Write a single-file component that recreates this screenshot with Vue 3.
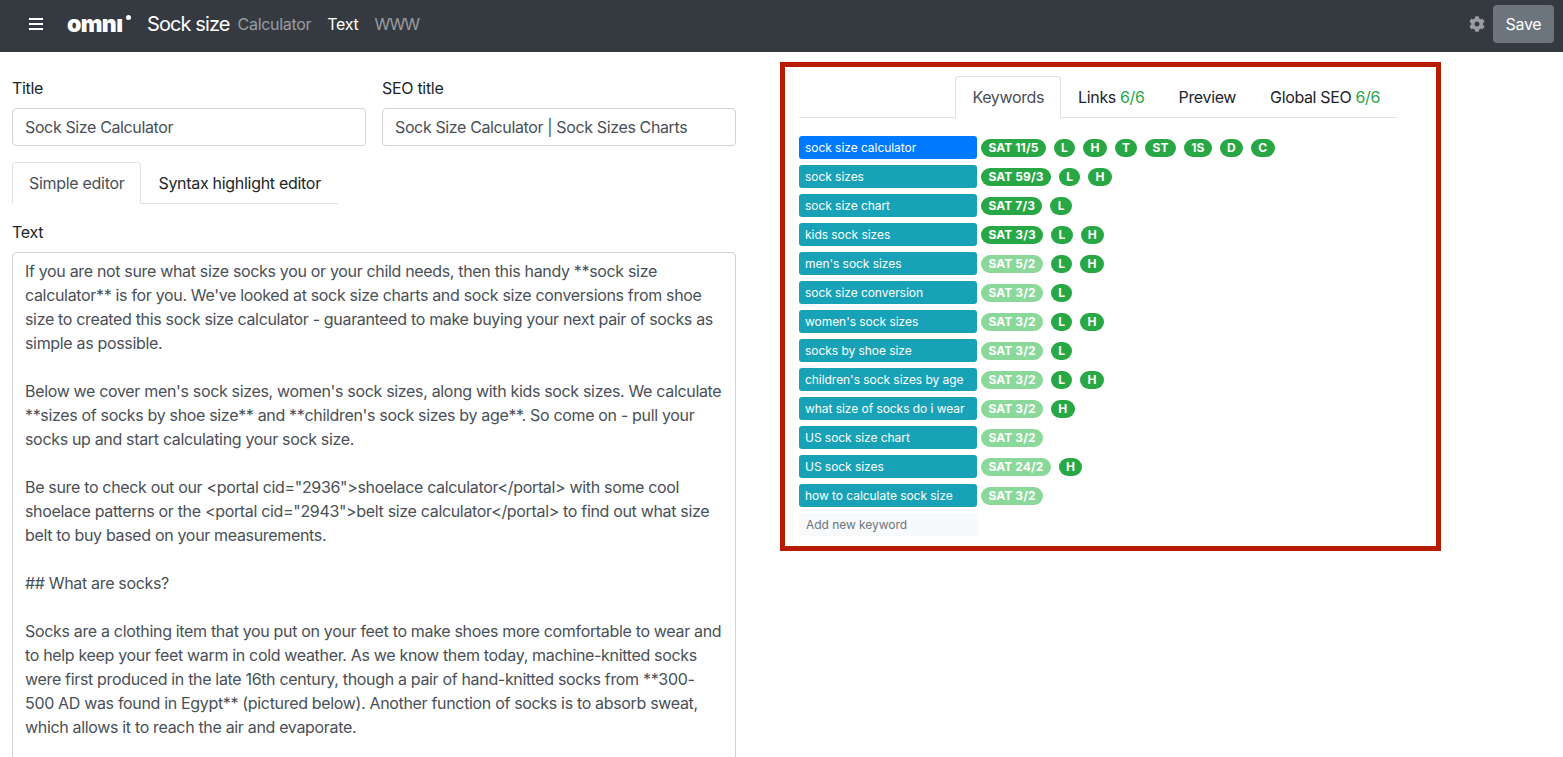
<script setup>
const keywords = [
  { name: 'sock size calculator', sat: '11/5', strong: true, tags: ['L', 'H', 'T', 'ST', '1S', 'D', 'C'], active: true },
  { name: 'sock sizes', sat: '59/3', strong: true, tags: ['L', 'H'] },
  { name: 'sock size chart', sat: '7/3', strong: true, tags: ['L'] },
  { name: 'kids sock sizes', sat: '3/3', strong: true, tags: ['L', 'H'] },
  { name: "men's sock sizes", sat: '5/2', tags: ['L', 'H'] },
  { name: 'sock size conversion', sat: '3/2', tags: ['L'] },
  { name: "women's sock sizes", sat: '3/2', tags: ['L', 'H'] },
  { name: 'socks by shoe size', sat: '3/2', tags: ['L'] },
  { name: "children's sock sizes by age", sat: '3/2', tags: ['L', 'H'] },
  { name: 'what size of socks do i wear', sat: '3/2', tags: ['H'] },
  { name: 'US sock size chart', sat: '3/2', tags: [] },
  { name: 'US sock sizes', sat: '24/2', tags: ['H'] },
  { name: 'how to calculate sock size', sat: '3/2', tags: [] },
];

const text = `If you are not sure what size socks you or your child needs, then this handy **sock size calculator** is for you. We've looked at sock size charts and sock size conversions from shoe size to created this sock size calculator - guaranteed to make buying your next pair of socks as simple as possible.

Below we cover men's sock sizes, women's sock sizes, along with kids sock sizes. We calculate **sizes of socks by shoe size** and **children's sock sizes by age**. So come on - pull your socks up and start calculating your sock size.

Be sure to check out our <portal cid="2936">shoelace calculator</portal> with some cool shoelace patterns or the <portal cid="2943">belt size calculator</portal> to find out what size belt to buy based on your measurements.

## What are socks?

Socks are a clothing item that you put on your feet to make shoes more comfortable to wear and to help keep your feet warm in cold weather. As we know them today, machine-knitted socks were first produced in the late 16th century, though a pair of hand-knitted socks from **300-500 AD was found in Egypt** (pictured below). Another function of socks is to absorb sweat, which allows it to reach the air and evaporate.`;
</script>

<template>
  <div class="page">
    <header class="topbar">
      <button class="burger" aria-label="Menu"><span></span><span></span><span></span></button>
      <span class="logo">omnı<i class="logo-dot"></i></span>
      <span class="calc-name">Sock size</span>
      <nav class="top-nav">
        <a class="muted">Calculator</a>
        <a class="current">Text</a>
        <a class="muted www">WWW</a>
      </nav>
      <div class="top-actions">
        <svg class="gear" viewBox="0 0 512 512" fill="currentColor">
          <path d="M487.4 315.7l-42.6-24.6c4.3-23.2 4.3-47 0-70.2l42.6-24.6c4.9-2.8 7.1-8.6 5.5-14-11.1-35.6-30-67.8-54.7-94.6-3.8-4.1-10-5.1-14.8-2.3L380.8 110c-17.9-15.4-38.5-27.3-60.8-35.1V25.8c0-5.6-3.9-10.5-9.4-11.7-36.7-8.2-74.3-7.8-109.2 0-5.5 1.2-9.4 6.1-9.4 11.7V75c-22.2 7.9-42.8 19.8-60.8 35.1L88.7 85.5c-4.9-2.8-11-1.9-14.8 2.3-24.7 26.7-43.6 58.9-54.7 94.6-1.7 5.4.6 11.2 5.5 14L67.3 221c-4.3 23.2-4.3 47 0 70.2l-42.6 24.6c-4.9 2.8-7.1 8.6-5.5 14 11.1 35.6 30 67.8 54.7 94.6 3.8 4.1 10 5.1 14.8 2.3l42.6-24.6c17.9 15.4 38.5 27.3 60.8 35.1v49.2c0 5.6 3.9 10.5 9.4 11.7 36.7 8.2 74.3 7.8 109.2 0 5.5-1.2 9.4-6.1 9.4-11.7v-49.2c22.2-7.9 42.8-19.8 60.8-35.1l42.6 24.6c4.9 2.8 11 1.9 14.8-2.3 24.7-26.7 43.6-58.9 54.7-94.6 1.5-5.5-.7-11.3-5.6-14.1zM256 336c-44.1 0-80-35.9-80-80s35.9-80 80-80 80 35.9 80 80-35.9 80-80 80z" />
        </svg>
        <button class="save">Save</button>
      </div>
    </header>

    <main class="content">
      <section class="editor">
        <div class="fields">
          <div class="field">
            <label>Title</label>
            <input class="control" value="Sock Size Calculator" />
          </div>
          <div class="field">
            <label>SEO title</label>
            <input class="control" value="Sock Size Calculator | Sock Sizes Charts" />
          </div>
        </div>

        <ul class="tabs editor-tabs">
          <li class="tab active">Simple editor</li>
          <li class="tab">Syntax highlight editor</li>
        </ul>

        <label class="text-label">Text</label>
        <textarea class="control text-area" :value="text"></textarea>
      </section>

      <aside class="seo-frame">
        <ul class="tabs seo-tabs">
          <li class="tab active">Keywords</li>
          <li class="tab">Links <span class="ok">6/6</span></li>
          <li class="tab">Preview</li>
          <li class="tab">Global SEO <span class="ok">6/6</span></li>
        </ul>

        <div class="keyword-list">
          <div v-for="kw in keywords" :key="kw.name" class="keyword-row">
            <button class="keyword" :class="{ selected: kw.active }">{{ kw.name }}</button>
            <span class="badge sat" :class="{ light: !kw.strong }">SAT {{ kw.sat }}</span>
            <span v-for="tag in kw.tags" :key="tag" class="badge">{{ tag }}</span>
          </div>
          <input class="new-keyword" placeholder="Add new keyword" />
        </div>
      </aside>
    </main>
  </div>
</template>

<style>
html, body {
  margin: 0;
  background: #fff;
}
</style>

<style scoped>
.page {
  height: 757px;
  overflow: hidden;
  font-family: Inter, "Liberation Sans", sans-serif;
  font-size: 16px;
  line-height: 24px;
  letter-spacing: -0.3px;
  color: #212529;
}

.topbar {
  box-sizing: border-box;
  display: flex;
  align-items: center;
  height: 52px;
  padding: 0 9px 4px 29px;
  background: #343a40;
  color: #fff;
}

.burger {
  display: flex;
  flex-direction: column;
  justify-content: space-between;
  width: 14px;
  height: 12px;
  padding: 0;
  border: 0;
  background: none;
}

.burger span {
  height: 2px;
  background: #fff;
}

.logo {
  position: relative;
  width: 55px;
  margin-left: 24px;
  font-size: 23px;
  font-weight: 900;
  letter-spacing: -0.6px;
  line-height: 24px;
}

.logo-dot {
  position: absolute;
  top: 3px;
  right: -9px;
  width: 5px;
  height: 5px;
  border-radius: 50%;
  background: #fff;
}

.calc-name {
  margin-left: 25px;
  font-size: 20px;
  letter-spacing: -0.9px;
}

.top-nav {
  display: flex;
  gap: 16px;
  margin-left: 8px;
}

.muted {
  color: rgba(255, 255, 255, 0.5);
}

.www {
  letter-spacing: -1.2px;
}

.current {
  color: #fff;
}

.top-actions {
  display: flex;
  align-items: center;
  gap: 8px;
  margin-left: auto;
}

.gear {
  width: 16px;
  height: 16px;
  color: rgba(255, 255, 255, 0.5);
}

.save {
  width: 61px;
  height: 38px;
  padding: 0;
  border: 0;
  border-radius: 4px;
  background: #6c757d;
  color: #fff;
  font: inherit;
  letter-spacing: inherit;
}

.content {
  display: flex;
  align-items: flex-start;
}

.editor {
  flex: none;
  width: 724px;
  margin: 24px 0 0 12px;
}

.fields {
  display: grid;
  grid-template-columns: 1fr 1fr;
  gap: 16px;
}

.field label,
.text-label {
  display: block;
  margin-bottom: 8px;
}

.control {
  box-sizing: border-box;
  display: block;
  width: 100%;
  height: 38px;
  padding: 6px 12px;
  border: 1px solid #ced4da;
  border-radius: 4px;
  background: #fff;
  color: #495057;
  font: inherit;
  letter-spacing: -0.37px;
  outline: none;
}

.tabs {
  display: flex;
  margin: 0;
  padding: 0;
  list-style: none;
  border-bottom: 1px solid #dee2e6;
}

.tab {
  margin-bottom: -1px;
  padding: 8px 16px;
  border: 1px solid transparent;
  border-radius: 4px 4px 0 0;
  color: #212529;
  line-height: 24px;
  white-space: nowrap;
}

.tab.active {
  border-color: #dee2e6 #dee2e6 #fff;
  color: #495057;
}

.editor-tabs {
  width: 326px;
  margin-top: 16px;
}

.text-label {
  margin-top: 16px;
}

.text-area {
  height: 560px;
  letter-spacing: -0.33px;
  resize: none;
}

.seo-frame {
  box-sizing: border-box;
  flex: none;
  width: 661px;
  height: 489px;
  margin: 10px 0 0 44px;
  padding: 9px 39px 0 14px;
  border: 5px solid #b71c00;
}

.seo-tabs {
  justify-content: flex-end;
  letter-spacing: -0.36px;
}

.ok {
  color: #28a745;
}

.keyword-list {
  display: flex;
  flex-direction: column;
  gap: 6px;
  margin-top: 18px;
}

.keyword-row {
  display: flex;
  align-items: center;
  gap: 8px;
  height: 23px;
}

.keyword {
  flex: none;
  box-sizing: border-box;
  width: 178px;
  height: 23px;
  margin-right: -4px;
  padding: 0 6px;
  border: 0;
  border-radius: 3px;
  background: #17a2b8;
  color: #fff;
  font: inherit;
  font-size: 12px;
  letter-spacing: -0.05px;
  line-height: 18px;
  text-align: left;
}

.keyword.selected {
  background: #007bff;
}

.badge {
  padding: 0 7.2px;
  border-radius: 10px;
  background: #28a745;
  color: #fff;
  font-size: 12px;
  font-weight: 700;
  letter-spacing: 0.2px;
  line-height: 18px;
}

.badge.sat {
  padding: 0 7.4px;
  letter-spacing: 0.12px;
}

.badge.light {
  background: #8ad89a;
}

.new-keyword {
  box-sizing: border-box;
  width: 179px;
  height: 23px;
  padding: 0 7px;
  border: 0;
  border-radius: 3px;
  background: #f8f9fa;
  font: inherit;
  font-size: 12px;
  letter-spacing: -0.05px;
  outline: none;
}

.new-keyword::placeholder {
  color: #6c757d;
}
</style>
